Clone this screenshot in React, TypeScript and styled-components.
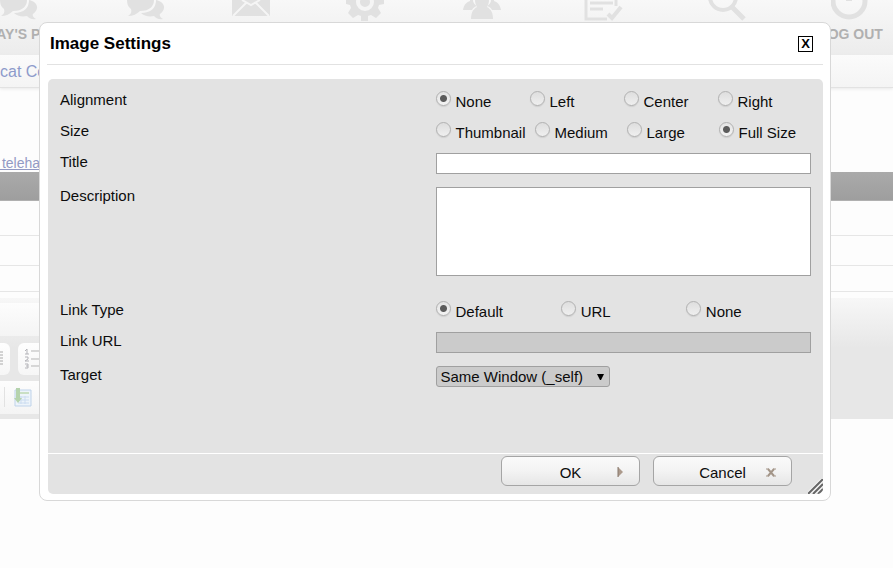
import React from "react";
import styled, { createGlobalStyle } from "styled-components";

const GlobalStyle = createGlobalStyle`
  *, *::before, *::after { box-sizing: border-box; }
  body {
    margin: 0;
    overflow: hidden;
    background: #fdfdfd;
    color: #0c0c0c;
    font-family: "Liberation Sans", Arial, sans-serif;
    font-size: 15px;
  }
  button, input, textarea, select { font: inherit; color: inherit; margin: 0; }
`;

const Page = styled.div`
  position: relative;
  min-height: 100vh;
  overflow: hidden;
`;

const Nav = styled.nav`
  display: flex;
  height: 55px;
  margin-left: -45px;
  overflow: hidden;
  background: linear-gradient(#f8f8f8, #ececec);
`;

const NavItem = styled.a<{ $width: number }>`
  display: flex;
  flex: 0 0 ${(p) => p.$width}px;
  flex-direction: column;
  align-items: center;
  color: #b0b0b0;
  font-size: 14px;
  font-weight: bold;
  line-height: 16px;
  text-decoration: none;
  white-space: nowrap;
`;

const NavIcon = styled.svg`
  display: block;
  width: 40px;
  height: 22px;
  margin-bottom: 4px;
  color: #e1e1e1;
`;

const Breadcrumb = styled.div`
  height: 33px;
  background: linear-gradient(#fbfbfb, #f4f4f4);
  border-bottom: 1px solid #e2e2e2;
  box-shadow: 0 1px 3px #e8e8e8;
  font-size: 16px;
  line-height: 34px;
  a { color: #8d9bcb; text-decoration: none; }
`;

const Location = styled.div`
  height: 84px;
  margin-left: -2px;
  padding-top: 67px;
  font-size: 14px;
  line-height: 16px;
  a { color: #9299c4; }
`;

const DarkBar = styled.div`
  height: 29px;
  background: linear-gradient(#aaaaaa, #9e9e9e);
  border-bottom: 1px solid #b0b0b0;
`;

const Line = styled.div<{ $height: number }>`
  height: ${(p) => p.$height}px;
  border-bottom: 1px solid #e6e6e6;
`;

const Editor = styled.section`
  height: 121px;
  margin-top: 6px;
  padding-top: 5px;
  background: linear-gradient(#f7f7f7, #e7e7e7 50px);
`;

const Tools = styled.div<{ $raised?: boolean }>`
  display: flex;
  width: 90%;
  height: 33px;
  background: ${(p) => (p.$raised ? "linear-gradient(#fdfdfd, #f4f4f4)" : "none")};
`;

const ButtonTools = styled(Tools)`
  gap: 8px;
  height: 45px;
  padding: 7px 0 6px;
`;

const Tool = styled.button<{ $wide?: boolean }>`
  display: flex;
  align-items: center;
  justify-content: ${(p) => (p.$wide ? "flex-start" : "flex-end")};
  width: ${(p) => (p.$wide ? 60 : 10)}px;
  padding: 0 6px;
  padding-left: ${(p) => (p.$wide ? 6 : 0)}px;
  border: 0;
  border-radius: ${(p) => (p.$wide ? "6px" : "0 6px 6px 0")};
  background: linear-gradient(#fefefe, #f6f6f6);
  svg { flex: none; }
`;

const Divider = styled.span`
  width: 1px;
  height: 20px;
  margin: 6px 8px 0 4px;
  background: #e2e2e2;
`;

const IconTool = styled.button`
  align-self: center;
  padding: 0;
  border: 0;
  background: none;
  svg { display: block; }
`;

const Dialog = styled.section`
  position: absolute;
  top: 22px;
  left: 39px;
  right: 62px;
  padding: 0 7px 6px;
  border: 1px solid #d8d8d8;
  border-radius: 8px;
  background: #fff;
`;

const DialogHeader = styled.header`
  display: flex;
  align-items: center;
  justify-content: space-between;
  height: 42px;
  padding: 0 10px 0 3px;
  border-bottom: 1px solid #e2e2e2;
`;

const DialogTitle = styled.h1`
  margin: 0;
  color: #000;
  font-size: 17px;
  line-height: 20px;
`;

const Close = styled.button`
  width: 15px;
  height: 16px;
  padding: 0;
  border: 1px solid #000;
  background: #fff;
  color: #000;
  font-size: 13px;
  font-weight: bold;
  line-height: 14px;
`;

const Panel = styled.form`
  position: relative;
  margin: 14px 0 0 1px;
  border-radius: 5px;
  overflow: hidden;
  background: #e3e3e3;
`;

const Fields = styled.div`
  padding: 6px 12px 62px;
`;

const Row = styled.div<{ $height?: number }>`
  display: grid;
  grid-template-columns: 1fr 1fr;
  align-items: start;
  min-height: ${(p) => p.$height ?? 31}px;
  padding-top: 6px;
  line-height: 18px;
`;

const Options = styled.div<{ $columns: string }>`
  display: grid;
  grid-template-columns: ${(p) => p.$columns};
`;

const Option = styled.label`
  display: flex;
  align-items: flex-start;
  gap: 5px;
  line-height: 22px;
  white-space: nowrap;
`;

const Radio = styled.input`
  appearance: none;
  flex: none;
  width: 15px;
  height: 15px;
  border: 1px solid #b1b1b1;
  border-radius: 50%;
  background: linear-gradient(#dedede, #efefef);
  box-shadow: 0 1px 1px #cfcfcf;
  &:checked {
    background: radial-gradient(circle, #5c5c5c 3px, transparent 4px), linear-gradient(#e4e4e4, #f3f3f3);
  }
`;

const TextInput = styled.input`
  width: 100%;
  height: 21px;
  padding: 0 4px;
  border: 1px solid #a0a0a0;
  background: #fff;
  &:disabled { background: #cbcbcb; }
`;

const TextArea = styled.textarea`
  display: block;
  width: 100%;
  height: 89px;
  border: 1px solid #a0a0a0;
  background: #fff;
  resize: none;
`;

const SelectBox = styled.div`
  display: grid;
  justify-self: start;
  align-items: center;
  width: 174px;
  > * { grid-area: 1 / 1; }
  svg { justify-self: end; margin-right: 6px; pointer-events: none; }
`;

const Select = styled.select`
  appearance: none;
  width: 100%;
  height: 21px;
  padding: 0 4px;
  border: 1px solid #a0a0a0;
  border-radius: 3px;
  background: #cbcbcb;
  &:disabled { opacity: 1; }
`;

const Footer = styled.footer`
  display: flex;
  justify-content: flex-end;
  gap: 13px;
  height: 41px;
  padding: 2px 31px 0 0;
  border-top: 1px solid #fff;
`;

const Action = styled.button`
  display: grid;
  grid-template-columns: 1fr auto 1fr;
  align-items: center;
  width: 139px;
  height: 30px;
  padding: 2px 15px 0;
  border: 1px solid #a5a5a5;
  border-radius: 6px;
  background: linear-gradient(#fafafa, #f3f3f3 50%, #e6e6e6);
  span { grid-column: 2; }
  svg { justify-self: end; }
`;

const Grip = styled.svg`
  position: absolute;
  right: 0;
  bottom: 0;
`;

const Chat = () => (
  <g fill="currentColor">
    <path d="M2 0H29C29 6 25 11 15 11C12 14 8 16 3 16C6 14 7 12 6 9C3 7 2 4 2 0Z" />
    <path d="M31 0C41 2 41 10 35 14C34 16 36 18 38 19C34 20 31 18 29 16C24 17 19 16 16 13C26 13 31 8 31 0Z" />
  </g>
);
const drawings: Record<string, React.ReactNode> = {
  chat: <Chat />,
  mail: <g><path d="M1 0H39V16H1Z" fill="currentColor" /><path d="M11 0L20 5L29 0M2 16L15 3M38 16L25 3" fill="none" stroke="#f5f5f5" strokeWidth="2" /></g>,
  gear: <g><path d="M1 0H39V4L34 5L33 8L36 13L31 18L26 15L23 16V21H16V16L13 15L8 18L3 13L6 8L5 5L1 4Z" fill="currentColor" /><circle cx="20" cy="2" r="7" fill="none" stroke="#f5f5f5" strokeWidth="4" /></g>,
  group: <g fill="currentColor"><path d="M1 10C2 4 5 2 8 1V0H11C11 3 13 5 15 6C12 7 11 8 10 10Z" /><path d="M39 10C38 4 35 2 32 1V0H29C29 3 27 5 25 6C28 7 29 8 30 10Z" /><path d="M13 0H27C27 3 26 5 25 7C29 9 31 13 31 19H9C9 13 11 9 15 7C14 5 13 3 13 0Z" /></g>,
  list: <g fill="none" stroke="currentColor"><path d="M3 0V19H24M33 0V6" strokeWidth="3" /><path d="M7 3H30M7 9H20" strokeWidth="3" /><path d="M25 14L29 18L38 7" strokeWidth="4" /></g>,
  search: <g fill="none" stroke="currentColor"><circle cx="16" cy="-3" r="13" strokeWidth="4" /><path d="M24 6L37 19" strokeWidth="5" /></g>,
  power: <g><circle cx="18" cy="1" r="16" fill="none" stroke="currentColor" strokeWidth="5" /><path d="M15 0H21V1H15Z" fill="currentColor" /></g>,
};

const navItems = [
  { icon: "chat", width: 126, label: "TODAY'S PLAN" },
  { icon: "chat", width: 128 },
  { icon: "mail", width: 84 },
  { icon: "gear", width: 144 },
  { icon: "group", width: 90 },
  { icon: "list", width: 152 },
  { icon: "search", width: 96 },
  { icon: "power", width: 152, label: "LOG OUT" },
];

function RadioGroup({ name, label, items, selected, columns }: {
  name: string; label: string; items: string[]; selected: string; columns: string;
}) {
  return (
    <Row role="radiogroup" aria-labelledby={`${name}-label`}>
      <span id={`${name}-label`}>{label}</span>
      <Options $columns={columns}>
        {items.map((item) => (
          <Option key={item}>
            <Radio type="radio" name={name} value={item} defaultChecked={item === selected} />
            {item}
          </Option>
        ))}
      </Options>
    </Row>
  );
}

export default function App() {
  return (
    <Page>
      <GlobalStyle />
      <Nav>
        {navItems.map((item, i) => (
          <NavItem key={i} href="#" $width={item.width}>
            <NavIcon viewBox="0 0 40 22" aria-hidden="true">{drawings[item.icon]}</NavIcon>
            {item.label}
          </NavItem>
        ))}
      </Nav>
      <Breadcrumb><a href="#">cat Co</a></Breadcrumb>
      <Location><a href="#">&nbsp;teleha</a></Location>
      <DarkBar />
      <Line $height={35} />
      <Line $height={30} />
      <Line $height={26} />
      <Editor>
        <Tools $raised />
        <ButtonTools>
          <Tool type="button" aria-label="Align">
            <svg width="4" height="16" viewBox="0 0 4 16"><path d="M0 1H3M0 4H3M0 7H3M0 10H3M0 13H3" stroke="#aaa" /></svg>
          </Tool>
          <Tool type="button" aria-label="Numbered list" $wide>
            <svg width="20" height="20" viewBox="0 0 20 20" fill="none">
              <path d="M1 2L3 0V5M1 5H5M1 8H4V10L1 12H5M1 15H4V19H1M2 17H4" stroke="#b3b3b8" />
              <path d="M7 2H19M7 10H19M7 17H19" stroke="#b5b5b5" />
            </svg>
          </Tool>
        </ButtonTools>
        <Tools $raised>
          <Divider />
          <IconTool type="button" aria-label="Insert template">
            <svg width="20" height="20" viewBox="0 0 20 20" fill="none">
              <path d="M2 2H18V18H2Z" fill="#edf4fa" stroke="#bfd3ea" />
              <path d="M7 5H16" stroke="#c9dfc4" strokeWidth="2" />
              <path d="M5 9H16M5 12H16M5 15H16M8 8V16M12 8V16" stroke="#cbdcf0" />
              <path d="M3 0H7V10H9L5 15L1 10H3Z" fill="#b5d3ad" />
            </svg>
          </IconTool>
        </Tools>
      </Editor>

      <Dialog role="dialog" aria-labelledby="dialog-title">
        <DialogHeader>
          <DialogTitle id="dialog-title">Image Settings</DialogTitle>
          <Close type="button" aria-label="Close">X</Close>
        </DialogHeader>
        <Panel onSubmit={(e) => e.preventDefault()}>
          <Fields>
            <RadioGroup name="alignment" label="Alignment" items={["None", "Left", "Center", "Right"]} selected="None" columns="repeat(3, 94px) 1fr" />
            <RadioGroup name="size" label="Size" items={["Thumbnail", "Medium", "Large", "Full Size"]} selected="Full Size" columns="99px 92px 92px 1fr" />
            <Row $height={34}>
              <label htmlFor="title">Title</label>
              <TextInput id="title" type="text" />
            </Row>
            <Row $height={114}>
              <label htmlFor="description">Description</label>
              <TextArea id="description" />
            </Row>
            <RadioGroup name="link-type" label="Link Type" items={["Default", "URL", "None"]} selected="Default" columns="repeat(3, 1fr)" />
            <Row $height={34}>
              <label htmlFor="link-url">Link URL</label>
              <TextInput id="link-url" type="text" disabled />
            </Row>
            <Row>
              <label htmlFor="target">Target</label>
              <SelectBox>
                <Select id="target" disabled>
                  <option>Same Window (_self)</option>
                </Select>
                <svg width="7" height="6" viewBox="0 0 7 6" aria-hidden="true"><path d="M0 0H7L4 6H3Z" fill="#000" /></svg>
              </SelectBox>
            </Row>
          </Fields>
          <Footer>
            <Action type="submit">
              <span>OK</span>
              <svg width="7" height="10" viewBox="0 0 7 10" aria-hidden="true"><path d="M1 0L6 5L1 10Z" fill="#ac9a8c" /><path d="M1 0V10" stroke="#85766b" /></svg>
            </Action>
            <Action type="button">
              <span>Cancel</span>
              <svg width="10" height="9" viewBox="0 0 10 9" aria-hidden="true"><path d="M2 1L8 8M8 1L2 8" stroke="#a39588" strokeWidth="2" /><path d="M0 1H3M7 1H10M0 8H3M7 8H10" stroke="#a39588" /></svg>
            </Action>
          </Footer>
          <Grip width="15" height="15" viewBox="0 0 15 15" aria-hidden="true">
            <path d="M0 15L15 0M5 15L15 5M10 15L15 10" stroke="#f4f4f4" strokeWidth="4" />
            <path d="M0 15L15 0M5 15L15 5M10 15L15 10" stroke="#666" strokeWidth="2" />
          </Grip>
        </Panel>
      </Dialog>
    </Page>
  );
}
